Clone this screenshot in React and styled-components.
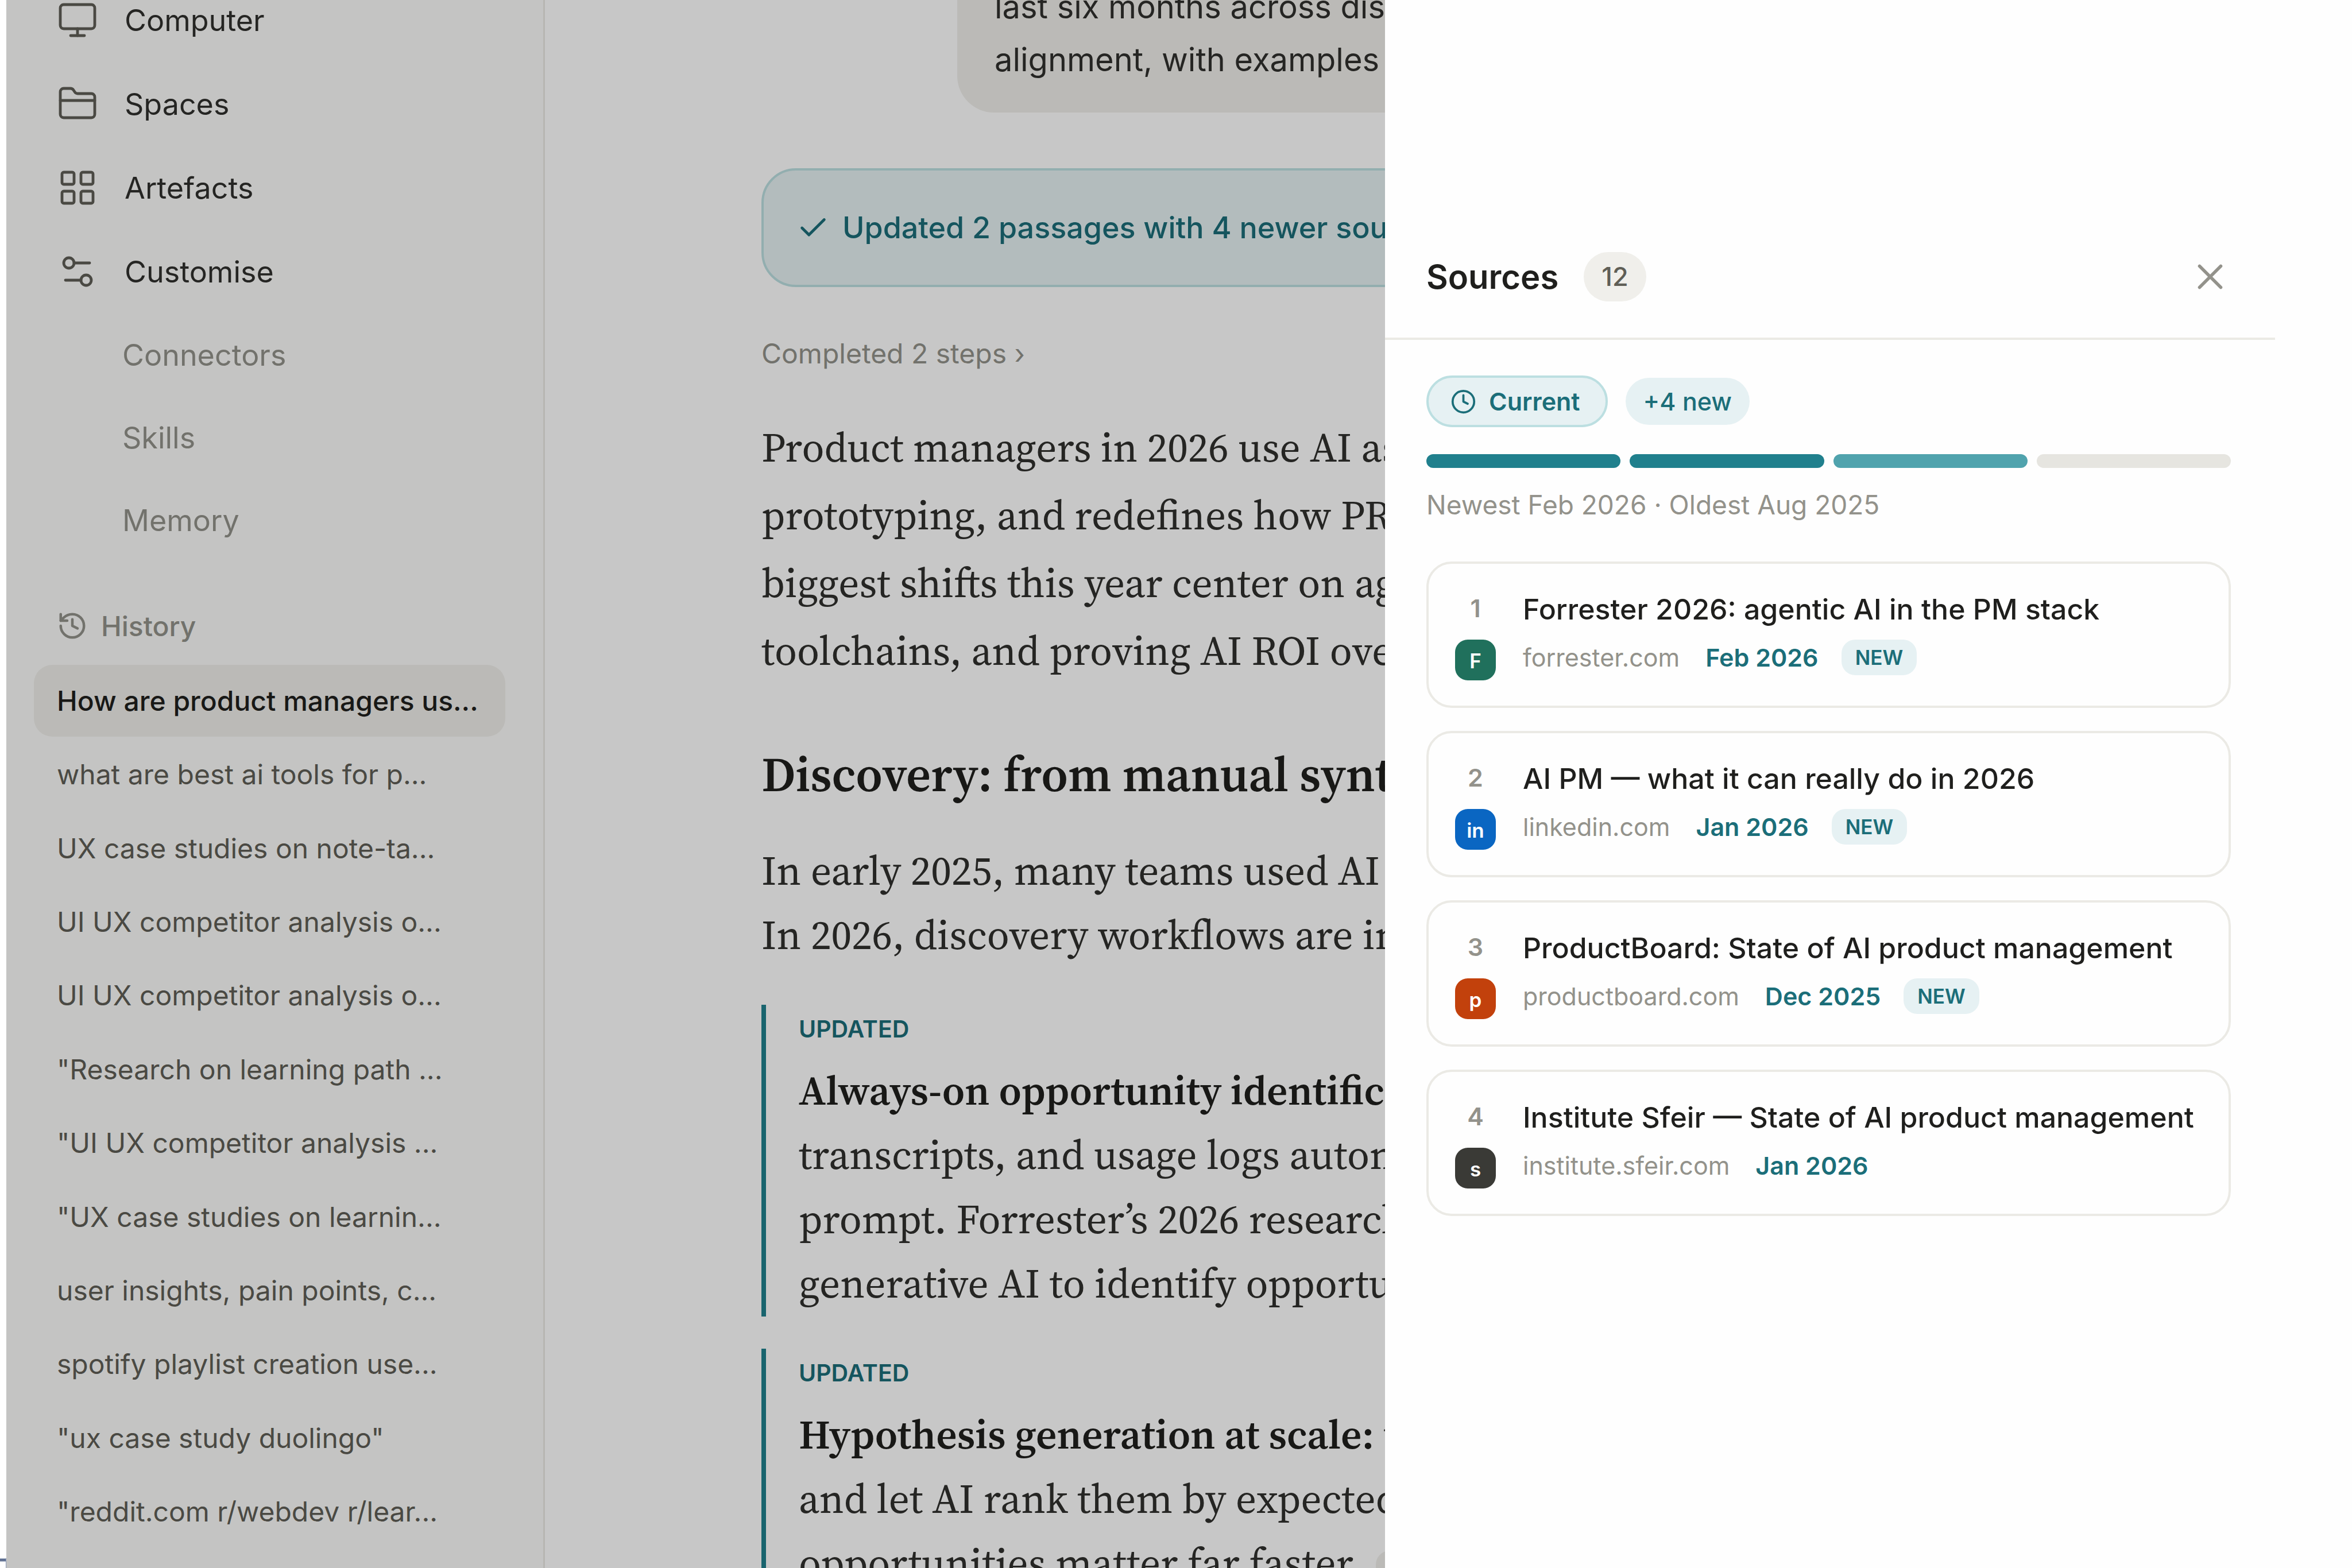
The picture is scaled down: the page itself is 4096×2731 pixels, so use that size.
import React from 'react'
import styled, {createGlobalStyle, ThemeProvider} from 'styled-components'
import {
  Check,
  Clock,
  FolderClosed,
  History,
  LayoutGrid,
  Monitor,
  Settings2,
  X,
} from 'lucide-react'

const theme = {
  sans: '"Inter", "Liberation Sans", sans-serif',
  serif: '"Source Serif 4", "Source Serif Pro", "Liberation Serif", serif',
  colors: {
    ink: '#1f1f1d',
    text: '#30302d',
    soft: '#5f5e56',
    muted: '#93928b',
    line: '#ebeae5',
    chip: '#f0efeb',
    teal: '#20808d',
    tealDark: '#1b6e79',
    tealPale: '#e6f1f3',
    tealLine: '#bcdfe1',
  },
}

const GlobalStyle = createGlobalStyle`
  * {
    box-sizing: border-box;
  }

  body {
    margin: 0;
    background: #ffffff;
    font-family: ${theme.sans};
    color: ${theme.colors.text};
  }

  h1, h2, p, ul, ol {
    margin: 0;
    padding: 0;
  }

  ul, ol {
    list-style: none;
  }

  a {
    color: inherit;
    text-decoration: none;
  }

  button {
    margin: 0;
    border: 0;
    background: none;
    font-family: inherit;
  }
`

const Screen = styled.div`
  display: grid;
  grid-template-columns: 11px minmax(0, 938fr) minmax(0, 1463fr) minmax(
      0,
      1684fr
    );
  grid-template-rows: 100vh;
  height: 100vh;
  overflow: hidden;
`

const Gutter = styled.div`
  grid-area: 1 / 1;
  display: flex;
  align-items: flex-end;
`

const GutterFrame = styled.div`
  width: 11px;
  height: 17px;
  border-top: 2px solid #97a3b8;
  border-right: 1px solid #8d9bb8;
  box-shadow: inset 0 2px #3f527c, inset 0 4px #97a3b8;
`

const Sidebar = styled.aside`
  grid-area: 1 / 2;
  display: flex;
  flex-direction: column;
  padding: 0 66px 36px 48px;
  border-right: 3px solid ${theme.colors.line};
  background: #fcfcfa;
  overflow: hidden;
`

const NavLink = styled.a`
  display: flex;
  align-items: center;
  gap: 46px;
  height: 146px;
  padding-left: 40px;
  font-size: 52px;
  color: ${theme.colors.text};

  svg {
    flex: none;
    color: ${theme.colors.soft};
  }
`

const Nav = styled.nav`
  margin-top: -38px;
`

const SubLink = styled.a`
  display: flex;
  align-items: center;
  height: 144px;
  padding-left: 154px;
  font-size: 52px;
  color: ${theme.colors.muted};
`

const HistoryHead = styled.h2`
  display: flex;
  align-items: center;
  gap: 23px;
  height: 78px;
  margin: 73px 0 29px;
  padding-left: 40px;
  font-size: 48px;
  font-weight: 500;
  color: ${theme.colors.muted};
`

const HistoryList = styled.ul`
  flex: 1;
  display: flex;
  flex-direction: column;
  justify-content: space-between;
`

const HistoryLink = styled.a`
  display: flex;
  align-items: center;
  height: 125px;
  padding: 0 40px;
  border-radius: 32px;
  background: ${({$active}) => ($active ? theme.colors.chip : 'transparent')};
  font-size: 48px;
  font-weight: ${({$active}) => ($active ? 500 : 400)};
  color: ${({$active}) => ($active ? theme.colors.ink : theme.colors.soft)};
  white-space: nowrap;
`

const Thread = styled.main`
  grid-area: 1 / 3;
  background: #ffffff;
  overflow: hidden;
`

// wider than the space the open drawer leaves, the rest is clipped
const ThreadColumn = styled.div`
  display: flex;
  flex-direction: column;
  width: 120%;
  padding-left: 377px;
  white-space: nowrap;
`

const Question = styled.div`
  flex: none;
  height: 196px;
  margin-left: 341px;
  padding: 0 65px 46px;
  display: flex;
  flex-direction: column;
  justify-content: flex-end;
  border-radius: 0 0 64px 64px;
  background: ${theme.colors.chip};
  font-size: 56px;
  line-height: 92px;
`

const Notice = styled.div`
  flex: none;
  display: flex;
  align-items: center;
  gap: 22px;
  height: 207px;
  margin: 97px 0 78px;
  padding: 0 57px;
  border: 4px solid ${theme.colors.tealLine};
  border-radius: 60px;
  background: ${theme.colors.tealPale};
  font-size: 52px;
  font-weight: 500;
  color: ${theme.colors.tealDark};

  svg {
    flex: none;
  }
`

const Steps = styled.button`
  align-self: flex-start;
  padding: 0;
  font-size: 48px;
  line-height: 76px;
  color: ${theme.colors.muted};
`

const Paragraph = styled.p`
  font-family: ${theme.serif};
  font-size: 71px;
  line-height: ${({$loose}) => ($loose ? 118 : 112)}px;

  span {
    display: block;
  }
`

const Intro = styled(Paragraph)`
  margin-top: 66px;
`

const Heading = styled.h1`
  margin: 97px 0 51px;
  font-family: ${theme.serif};
  font-size: 84px;
  line-height: 120px;
  font-weight: 600;
  color: ${theme.colors.ink};
`

const Updates = styled.div`
  display: flex;
  flex-direction: column;
  gap: 56px;
  margin-top: 66px;
`

const Update = styled.section`
  padding: 0 0 2px 57px;
  border-left: 8px solid ${theme.colors.teal};

  strong {
    font-weight: 600;
    color: ${theme.colors.ink};
  }
`

const UpdateTag = styled.p`
  padding: 11px 0 20px;
  font-size: 41px;
  line-height: 62px;
  font-weight: 600;
  color: ${theme.colors.tealDark};
`

const Cite = styled.a`
  display: inline-block;
  margin-left: 8px;
  padding: 0 20px;
  border-radius: 24px;
  background: ${theme.colors.chip};
  font-family: ${theme.sans};
  font-size: 40px;
  line-height: 64px;
  color: ${theme.colors.soft};
`

const Scrim = styled.div`
  grid-area: 1 / 2 / 2 / 4;
  background: rgba(0, 0, 0, 0.22);
`

const Drawer = styled.aside`
  grid-area: 1 / 4;
  padding-right: 134px;
  background: #fefefe;
`

const DrawerHead = styled.header`
  display: flex;
  align-items: center;
  height: 592px;
  padding: 376px 76px 0 72px;
  border-bottom: 4px solid ${theme.colors.line};
`

const DrawerTitle = styled.h2`
  font-size: 58px;
  font-weight: 600;
  color: ${theme.colors.ink};
`

const Count = styled.span`
  margin-left: 44px;
  padding: 0 31px;
  border-radius: 43px;
  background: ${theme.colors.chip};
  font-size: 45px;
  line-height: 86px;
  font-weight: 500;
  color: ${theme.colors.soft};
`

const CloseButton = styled.button`
  display: flex;
  margin-left: auto;
  padding: 0;
  color: ${theme.colors.muted};
`

const DrawerBody = styled.div`
  padding: 62px 77px 0 72px;
`

const Pills = styled.div`
  display: flex;
  align-items: center;
  gap: 31px;
`

const Freshness = styled.span`
  display: flex;
  align-items: center;
  gap: 22px;
  padding: 0 44px 0 38px;
  border: 4px solid ${theme.colors.tealLine};
  border-radius: 45px;
  background: ${theme.colors.tealPale};
  font-size: 43px;
  line-height: 82px;
  font-weight: 600;
  color: ${theme.colors.tealDark};
`

const NewCount = styled.span`
  padding: 0 31px;
  border-radius: 41px;
  background: ${theme.colors.tealPale};
  font-size: 43px;
  line-height: 82px;
  font-weight: 500;
  color: ${theme.colors.tealDark};
`

const Meter = styled.div`
  display: grid;
  grid-template-columns: repeat(4, 1fr);
  gap: 16px;
  margin-top: 47px;
`

const Segment = styled.span`
  height: 24px;
  border-radius: 12px;
  background: ${({$color}) => $color};
`

const Range = styled.p`
  margin: 26px 0 61px;
  font-size: 46px;
  line-height: 76px;
  color: ${theme.colors.muted};
`

const SourceList = styled.ol`
  display: flex;
  flex-direction: column;
  gap: 40px;
`

const SourceCard = styled.li`
  display: flex;
  gap: 47px;
  height: 255px;
  padding: 41px 46px;
  border: 4px solid ${theme.colors.line};
  border-radius: 44px;
`

const Rank = styled.div`
  display: flex;
  flex-direction: column;
  align-items: center;
  gap: 19px;
  width: 71px;
`

const RankNumber = styled.span`
  font-size: 43px;
  line-height: 72px;
  font-weight: 600;
  color: ${theme.colors.muted};
`

const Favicon = styled.span`
  width: 71px;
  height: 71px;
  padding-top: 3px;
  border-radius: 22px;
  background: ${({$color}) => $color};
  font-size: 35px;
  line-height: 68px;
  font-weight: 600;
  color: #ffffff;
  text-align: center;
`

const SourceText = styled.div`
  white-space: nowrap;
`

const SourceTitle = styled.a`
  display: block;
  font-size: 50px;
  line-height: 76px;
  font-weight: 500;
  color: ${theme.colors.ink};
`

const SourceMeta = styled.div`
  display: flex;
  align-items: center;
  margin-top: 14px;
  font-size: 43px;
  line-height: 64px;
  color: ${theme.colors.muted};
`

const SourceDate = styled.time`
  margin: 0 40px 0 45px;
  font-weight: 600;
  color: ${theme.colors.tealDark};
`

const NewTag = styled.span`
  padding: 0 24px;
  border-radius: 24px;
  background: ${theme.colors.tealPale};
  font-size: 35px;
  line-height: 62px;
  font-weight: 600;
  color: ${theme.colors.tealDark};
`

const navItems = [
  {label: 'Computer', Icon: Monitor},
  {label: 'Spaces', Icon: FolderClosed},
  {label: 'Artefacts', Icon: LayoutGrid},
  {label: 'Customise', Icon: Settings2},
]

const subItems = ['Connectors', 'Skills', 'Memory']

const historyItems = [
  'How are product managers us...',
  'what are best ai tools for p...',
  'UX case studies on note-ta...',
  'UI UX competitor analysis o...',
  'UI UX competitor analysis o...',
  '"Research on learning path ...',
  '"UI UX competitor analysis ...',
  '"UX case studies on learnin...',
  'user insights, pain points, c...',
  'spotify playlist creation use...',
  '"ux case study duolingo"',
  '"reddit.com r/webdev r/lear...',
]

const meter = ['#20808d', '#20808d', '#50a3ad', '#e6e5e0']

const sources = [
  {
    mark: 'F',
    color: '#20705c',
    title: 'Forrester 2026: agentic AI in the PM stack',
    site: 'forrester.com',
    date: 'Feb 2026',
    isNew: true,
  },
  {
    mark: 'in',
    color: '#0a66c2',
    title: 'AI PM — what it can really do in 2026',
    site: 'linkedin.com',
    date: 'Jan 2026',
    isNew: true,
  },
  {
    mark: 'p',
    color: '#c2410c',
    title: 'ProductBoard: State of AI product management',
    site: 'productboard.com',
    date: 'Dec 2025',
    isNew: true,
  },
  {
    mark: 's',
    color: '#3a3a36',
    title: 'Institute Sfeir — State of AI product management',
    site: 'institute.sfeir.com',
    date: 'Jan 2026',
    isNew: false,
  },
]

const SidebarPanel = () => (
  <Sidebar>
    <Nav>
      {navItems.map(({label, Icon}) => (
        <NavLink key={label} href="#">
          <Icon size={72} strokeWidth={1.6} />
          {label}
        </NavLink>
      ))}
      {subItems.map(label => (
        <SubLink key={label} href="#">
          {label}
        </SubLink>
      ))}
    </Nav>
    <HistoryHead>
      <History size={54} strokeWidth={2} />
      History
    </HistoryHead>
    <HistoryList>
      {historyItems.map((label, index) => (
        <li key={index}>
          <HistoryLink href="#" $active={index === 0}>
            {label}
          </HistoryLink>
        </li>
      ))}
    </HistoryList>
  </Sidebar>
)

const ThreadPanel = () => (
  <Thread>
    <ThreadColumn>
      <Question>
        <span>last six months across discovery</span>
        <span>alignment, with examples</span>
      </Question>
      <Notice>
        <Check size={58} strokeWidth={2} />
        Updated 2 passages with 4 newer sources
      </Notice>
      <Steps>Completed 2 steps ›</Steps>
      <Intro $loose>
        <span>Product managers in 2026 use AI as</span>
        <span>prototyping, and redefines how PRDs</span>
        <span>biggest shifts this year center on agentic</span>
        <span>toolchains, and proving AI ROI over</span>
      </Intro>
      <Heading>Discovery: from manual synthesis</Heading>
      <Paragraph>
        <span>In early 2025, many teams used AI</span>
        <span>In 2026, discovery workflows are in</span>
      </Paragraph>
      <Updates>
        <Update>
          <UpdateTag>UPDATED</UpdateTag>
          <Paragraph>
            <span>
              <strong>Always-on opportunity identification</strong>
            </span>
            <span>transcripts, and usage logs automatically</span>
            <span>prompt. Forrester’s 2026 research</span>
            <span>generative AI to identify opportunities</span>
          </Paragraph>
        </Update>
        <Update>
          <UpdateTag>UPDATED</UpdateTag>
          <Paragraph>
            <span>
              <strong>Hypothesis generation at scale:</strong> teams
            </span>
            <span>and let AI rank them by expected</span>
            <span>
              opportunities matter far faster. <Cite href="#">forrester</Cite>
            </span>
          </Paragraph>
        </Update>
      </Updates>
    </ThreadColumn>
  </Thread>
)

const SourceItem = ({source, rank}) => {
  const {mark, color, title, site, date, isNew} = source
  return (
    <SourceCard>
      <Rank>
        <RankNumber>{rank}</RankNumber>
        <Favicon $color={color}>{mark}</Favicon>
      </Rank>
      <SourceText>
        <SourceTitle href="#">{title}</SourceTitle>
        <SourceMeta>
          <span>{site}</span>
          <SourceDate>{date}</SourceDate>
          {isNew ? <NewTag>NEW</NewTag> : ''}
        </SourceMeta>
      </SourceText>
    </SourceCard>
  )
}

const SourcesDrawer = () => (
  <Drawer>
    <DrawerHead>
      <DrawerTitle>Sources</DrawerTitle>
      <Count>12</Count>
      <CloseButton aria-label="Close">
        <X size={74} strokeWidth={1.8} />
      </CloseButton>
    </DrawerHead>
    <DrawerBody>
      <Pills>
        <Freshness>
          <Clock size={45} strokeWidth={2} />
          Current
        </Freshness>
        <NewCount>+4 new</NewCount>
      </Pills>
      <Meter>
        {meter.map((color, index) => (
          <Segment key={index} $color={color} />
        ))}
      </Meter>
      <Range>Newest Feb 2026 · Oldest Aug 2025</Range>
      <SourceList>
        {sources.map((source, index) => (
          <SourceItem key={source.site} source={source} rank={index + 1} />
        ))}
      </SourceList>
    </DrawerBody>
  </Drawer>
)

const App = () => (
  <ThemeProvider theme={theme}>
    <GlobalStyle />
    <Screen>
      <Gutter>
        <GutterFrame />
      </Gutter>
      <SidebarPanel />
      <ThreadPanel />
      <Scrim />
      <SourcesDrawer />
    </Screen>
  </ThemeProvider>
)

export default App
